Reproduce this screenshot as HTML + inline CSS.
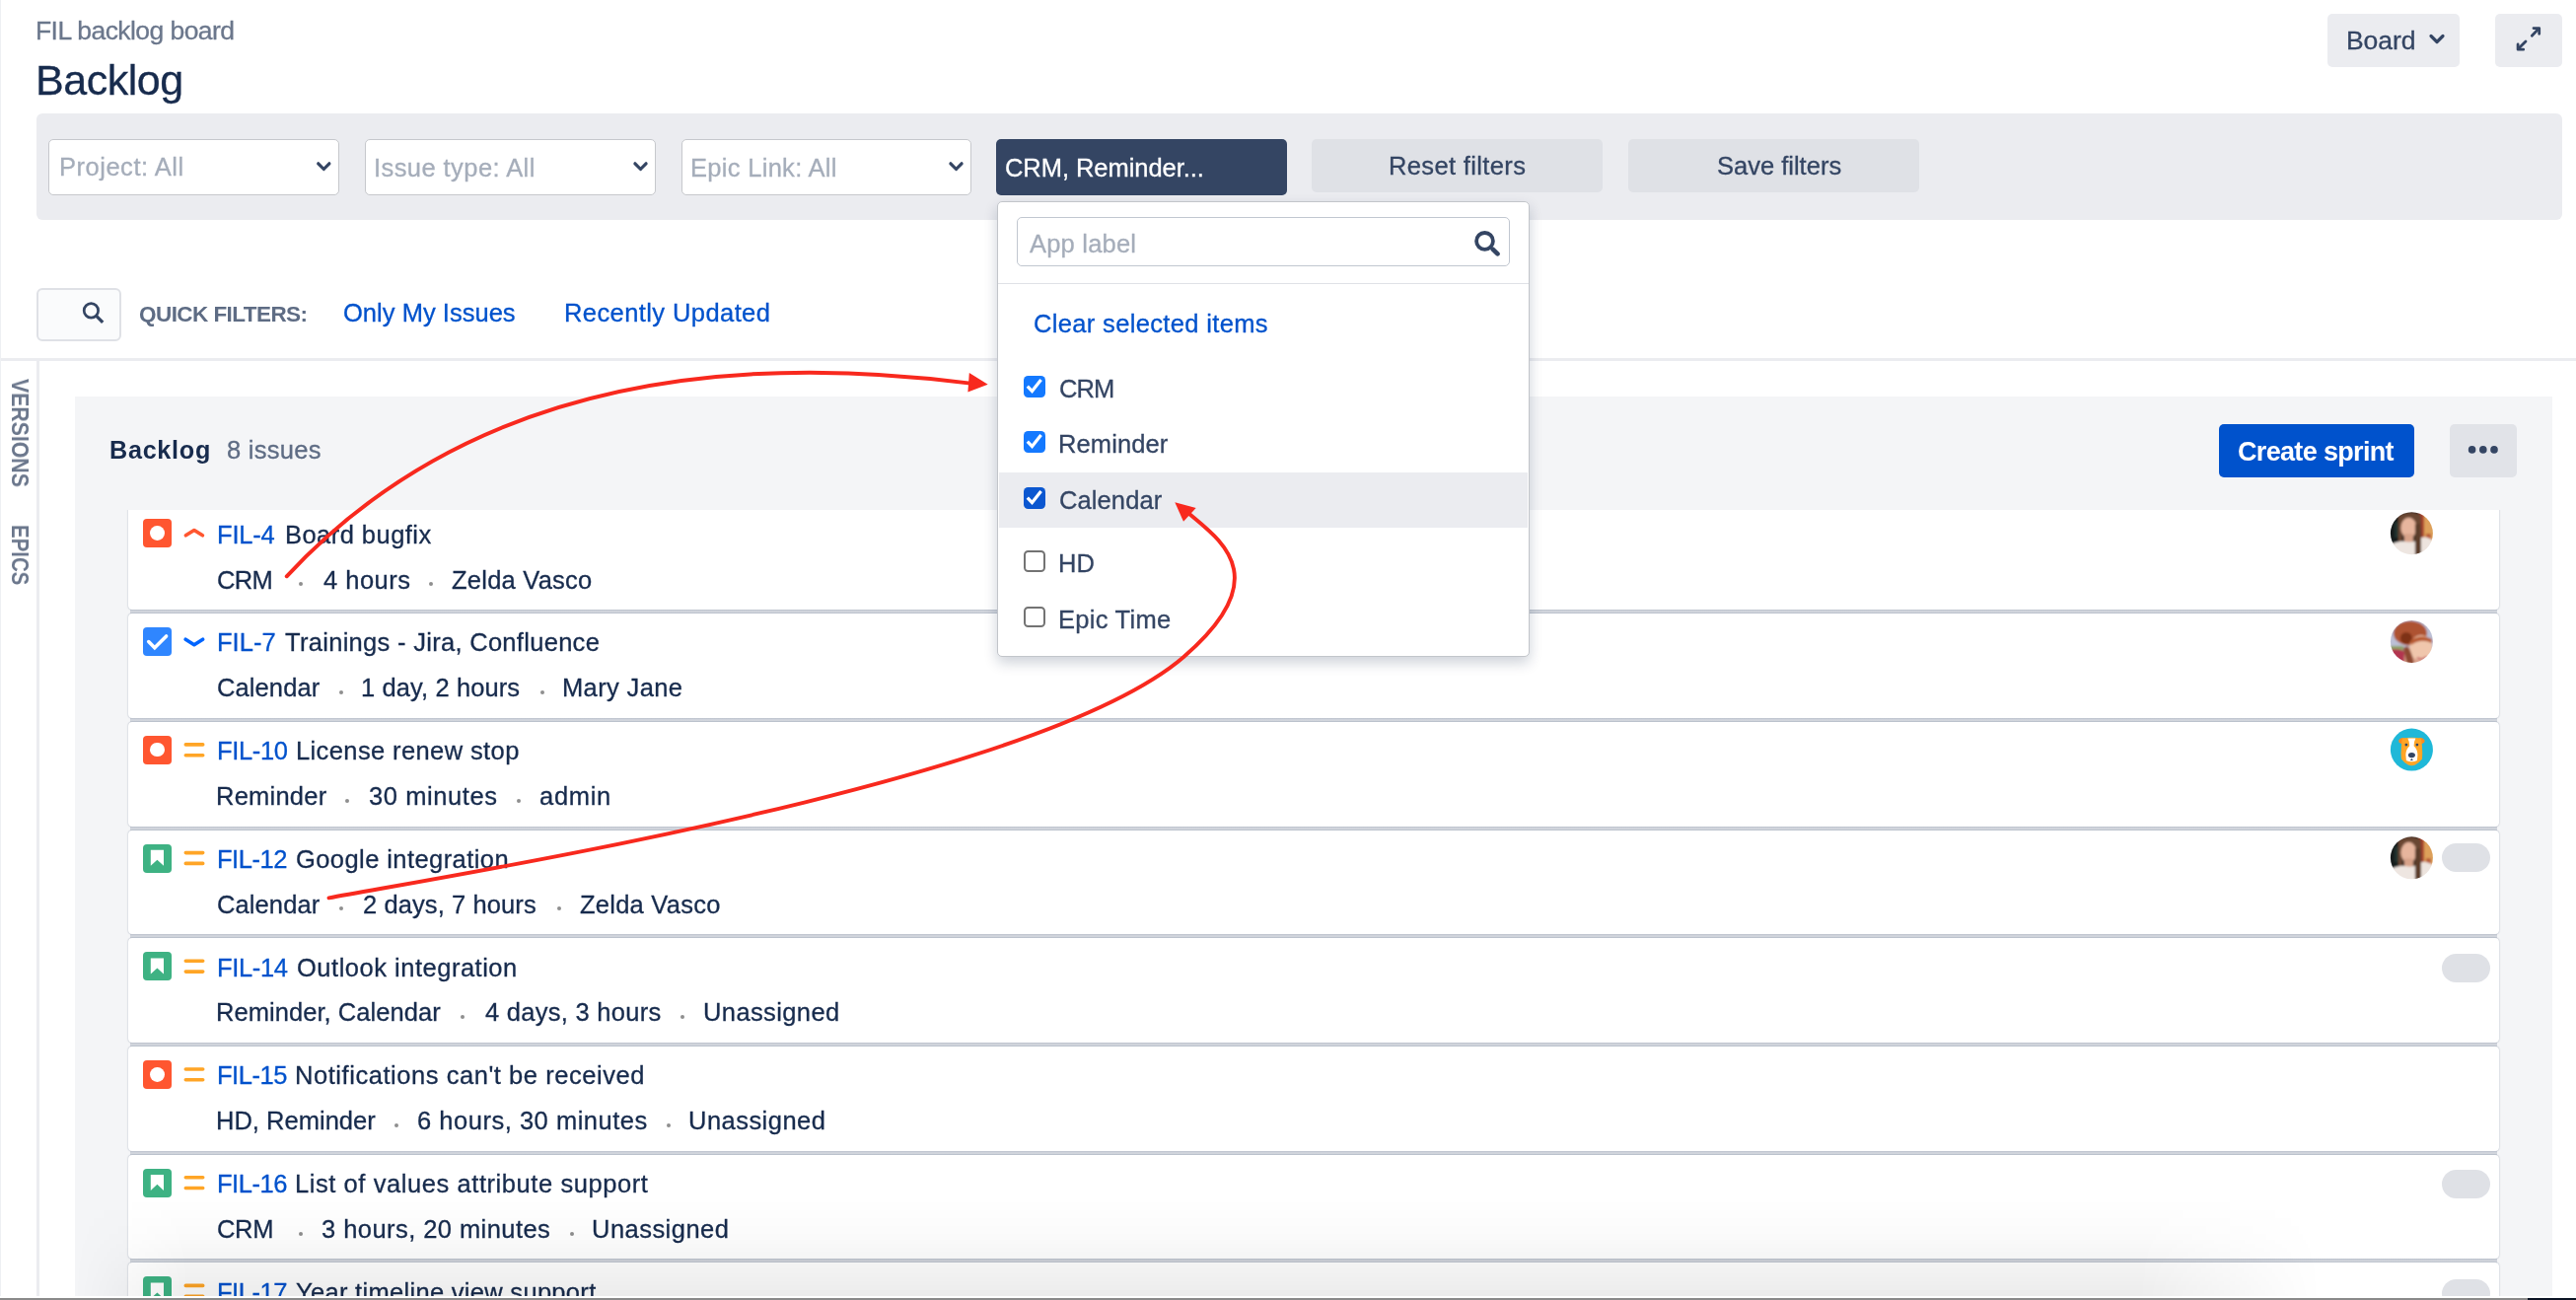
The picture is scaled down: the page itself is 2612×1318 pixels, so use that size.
<!DOCTYPE html><html><head><meta charset="utf-8"><style>
html,body{margin:0;padding:0;}
body{width:2612px;height:1318px;overflow:hidden;position:relative;background:#fff;font-family:"Liberation Sans",sans-serif;}
.tx{position:absolute;white-space:pre;line-height:1;will-change:transform;font-family:"Liberation Sans",sans-serif;}
.bx{position:absolute;box-sizing:border-box;}
svg{position:absolute;overflow:visible;}
</style></head><body>
<div class="bx" style="left:0.0px;top:0.0px;width:1.2px;height:1318.0px;background:#EEF0F3"></div>
<div class="bx" style="left:2360.0px;top:14.0px;width:134.0px;height:54.0px;background:#EBECF0;border-radius:5px"></div>
<svg style="left:0;top:0" width="2612" height="1318"><path d="M2465 36.5 L2471 42.5 L2477 36.5" fill="none" stroke="#344563" stroke-width="3.2" stroke-linecap="round" stroke-linejoin="round"/></svg>
<div class="bx" style="left:2530.0px;top:14.0px;width:68.0px;height:54.0px;background:#EBECF0;border-radius:5px"></div>
<svg style="left:0;top:0" width="2612" height="1318"><g fill="none" stroke="#344563" stroke-width="2.8" stroke-linecap="round" stroke-linejoin="round"><path d="M2567.3 36.2 L2573.6 29.6"/><path d="M2569 28.6 L2574.7 28.6 L2574.7 34.3"/><path d="M2561 42 L2554.2 48.8"/><path d="M2553.1 45 L2553.1 50.2 L2558.7 50.2"/></g></svg>
<div class="bx" style="left:37.0px;top:115.0px;width:2561.0px;height:107.5px;background:#EBECF0;border-radius:6px"></div>
<div class="bx" style="left:49.0px;top:141.0px;width:294.8px;height:57.0px;background:#fff;border:1px solid #C6C8CC;border-radius:5px"></div>
<svg style="left:0;top:0" width="2612" height="1318"><path d="M322.7 165.8 L328.3 171.5 L333.9 165.8" fill="none" stroke="#344563" stroke-width="3.2" stroke-linecap="round" stroke-linejoin="round"/></svg>
<div class="bx" style="left:370.0px;top:141.0px;width:295.0px;height:57.0px;background:#fff;border:1px solid #C6C8CC;border-radius:5px"></div>
<svg style="left:0;top:0" width="2612" height="1318"><path d="M643.9 165.8 L649.5 171.5 L655.1 165.8" fill="none" stroke="#344563" stroke-width="3.2" stroke-linecap="round" stroke-linejoin="round"/></svg>
<div class="bx" style="left:690.5px;top:141.0px;width:294.5px;height:57.0px;background:#fff;border:1px solid #C6C8CC;border-radius:5px"></div>
<svg style="left:0;top:0" width="2612" height="1318"><path d="M963.9 165.8 L969.5 171.5 L975.1 165.8" fill="none" stroke="#344563" stroke-width="3.2" stroke-linecap="round" stroke-linejoin="round"/></svg>
<div class="bx" style="left:1010.0px;top:141.0px;width:295.2px;height:56.6px;background:#344563;border-radius:5px"></div>
<div class="bx" style="left:1330.0px;top:141.0px;width:295.0px;height:53.8px;background:#DFE1E6;border-radius:5px"></div>
<div class="bx" style="left:1651.0px;top:141.0px;width:295.0px;height:53.8px;background:#DFE1E6;border-radius:5px"></div>
<div class="bx" style="left:37.2px;top:292.2px;width:85.6px;height:53.6px;background:#FAFBFC;border:2.8px solid #DFE1E6;border-radius:6px"></div>
<svg style="left:0;top:0" width="2612" height="1318"><circle cx="92.4" cy="314.9" r="7.2" fill="none" stroke="#344563" stroke-width="2.7"/><path d="M97 319.6 L104.2 326.8" stroke="#344563" stroke-width="3.3" stroke-linecap="butt"/></svg>
<div class="bx" style="left:1.0px;top:363.3px;width:2611.0px;height:2.5px;background:#EBECF0"></div>
<div class="bx" style="left:37.0px;top:365.8px;width:2.8px;height:948.2px;background:#EBECF0"></div>
<div class="tx" style="left:31.1px;top:384.2px;font-size:23.5px;font-weight:bold;color:#6B778C;transform-origin:0 0;transform:rotate(90deg) scaleX(0.905)">VERSIONS</div>
<div class="tx" style="left:31.1px;top:532.2px;font-size:23.5px;font-weight:bold;color:#6B778C;transform-origin:0 0;transform:rotate(90deg) scaleX(0.87)">EPICS</div>
<div class="bx" style="left:76.2px;top:402.0px;width:2511.8px;height:912.0px;background:#F4F5F7"></div>
<div class="bx" style="left:2250.0px;top:430.0px;width:198.0px;height:53.7px;background:#0052CC;border-radius:5px"></div>
<div class="bx" style="left:2484.3px;top:430.0px;width:67.7px;height:53.7px;background:#E1E3E8;border-radius:5px"></div>
<svg style="left:0;top:0" width="2612" height="1318"><g fill="#344563"><circle cx="2506.6" cy="455.9" r="3.8"/><circle cx="2517.8" cy="455.9" r="3.8"/><circle cx="2529" cy="455.9" r="3.8"/></g></svg>
<div class="bx" style="left:120px;top:517px;width:2430px;height:110px;overflow:hidden"><div class="bx" style="left:10.0px;top:-4.5px;width:2404.0px;height:105.8px;background:#fff;border-radius:4px;box-shadow:0 0 1.6px rgba(9,30,66,0.38)"></div></div>
<div class="bx" style="left:132.0px;top:618.1px;width:2400.0px;height:4.3px;background:linear-gradient(to bottom,#B8BEC9 0%,#CDD1D9 30%,#D5D9E0 60%,#C9CED6 100%)"></div>
<div class="bx" style="left:145.0px;top:526.4px;width:29.0px;height:29.0px;background:#FF5630;border-radius:4px"></div>
<div class="bx" style="left:152.0px;top:533.3px;width:14.8px;height:14.8px;background:#fff;border-radius:50%"></div>
<svg style="left:0;top:0" width="2612" height="1318"><path d="M188.4 542.8 L196.9 537.5 L205.4 542.8" fill="none" stroke="#FF5630" stroke-width="3.7" stroke-linecap="round" stroke-linejoin="round"/></svg>
<div class="bx" style="left:302.8px;top:590.3px;width:4.0px;height:4.0px;background:#8F8F8F;border-radius:50%"></div>
<div class="bx" style="left:434.8px;top:590.3px;width:4.0px;height:4.0px;background:#8F8F8F;border-radius:50%"></div>
<svg style="left:0;top:0" width="2612" height="1318"><defs><clipPath id="ca0"><circle cx="21.5" cy="21.5" r="21.5"/></clipPath><filter id="fb0" x="-20%" y="-20%" width="140%" height="140%"><feGaussianBlur stdDeviation="1.3"/></filter></defs><g transform="translate(2423.9 519.2)" clip-path="url(#ca0)"><g filter="url(#fb0)"><rect x="-5" y="-5" width="53" height="53" fill="#2A2420"/><rect x="-5" y="-5" width="16" height="53" fill="#151B1B"/><rect x="4" y="10" width="6" height="16" fill="#22302F"/><rect x="29" y="-5" width="6" height="53" fill="#A8402C"/><rect x="34" y="-5" width="14" height="53" fill="#DDA05A"/><rect x="36" y="22" width="5" height="8" fill="#B85A38"/><path d="M8 4 Q20 -3 31 3 L32 44 L24 44 L25 12 Q18 6 12 10 L12 32 L8 32 Z" fill="#6A4632"/><ellipse cx="18.5" cy="16" rx="8" ry="10.5" fill="#E7B59D"/><rect x="14" y="22" width="9" height="9" fill="#D8A38A"/><path d="M0 33 Q8 28 16 30 Q22 31 26 29 L26 48 L0 48 Z" fill="#EEE6E1"/><path d="M31 26 Q36 24 42 28 L44 48 L31 48 Z" fill="#EDE4DE"/><path d="M25 12 L30 12 L31 44 L25 44 Z" fill="#5C3C2A"/></g></g></svg>
<div class="bx" style="left:130.0px;top:622.2px;width:2404.0px;height:105.8px;background:#fff;border-radius:4px;box-shadow:0 0 1.6px rgba(9,30,66,0.38)"></div>
<div class="bx" style="left:132.0px;top:727.8px;width:2400.0px;height:4.3px;background:linear-gradient(to bottom,#B8BEC9 0%,#CDD1D9 30%,#D5D9E0 60%,#C9CED6 100%)"></div>
<div class="bx" style="left:145.0px;top:636.1px;width:29.0px;height:29.0px;background:#2F86FF;border-radius:4px"></div>
<svg style="left:0;top:0" width="2612" height="1318"><path d="M150.7 650.6 L156.8 656.7 L168.6 645.0" fill="none" stroke="#fff" stroke-width="3.6" stroke-linecap="round" stroke-linejoin="miter"/></svg>
<svg style="left:0;top:0" width="2612" height="1318"><path d="M188.2 648.3 L196.9 653.7 L205.6 648.3" fill="none" stroke="#0065FF" stroke-width="3.7" stroke-linecap="round" stroke-linejoin="round"/></svg>
<div class="bx" style="left:343.8px;top:700.0px;width:4.0px;height:4.0px;background:#8F8F8F;border-radius:50%"></div>
<div class="bx" style="left:547.5px;top:700.0px;width:4.0px;height:4.0px;background:#8F8F8F;border-radius:50%"></div>
<svg style="left:0;top:0" width="2612" height="1318"><defs><clipPath id="ca1"><circle cx="21.5" cy="21.5" r="21.5"/></clipPath><filter id="fb1" x="-20%" y="-20%" width="140%" height="140%"><feGaussianBlur stdDeviation="1.3"/></filter></defs><g transform="translate(2423.9 628.9)" clip-path="url(#ca1)"><g filter="url(#fb1)"><rect x="-5" y="-5" width="53" height="53" fill="#BCC0D6"/><rect x="-5" y="26" width="18" height="6" fill="#8FA268"/><path d="M-5 31 Q8 27 17 33 L22 48 L-5 48 Z" fill="#B23650"/><ellipse cx="20" cy="13" rx="17" ry="12.5" fill="#AE5230"/><ellipse cx="16" cy="18" rx="6" ry="6" fill="#7E3218"/><path d="M14 28 L30 26 L34 48 L14 48 Z" fill="#D9A08A"/><ellipse cx="31" cy="28" rx="11.5" ry="13" fill="#F0C6AC"/><path d="M20 21 Q30 13 42 19 L42 23 Q31 18 21 25 Z" fill="#B85A32"/><path d="M17 26 Q21 30 24 44 L18 48 Q14 34 13 28 Z" fill="#8E4A30"/><path d="M27 38 Q32 41 37 37" stroke="#C86A6A" stroke-width="2" fill="none"/></g></g></svg>
<div class="bx" style="left:130.0px;top:731.9px;width:2404.0px;height:105.8px;background:#fff;border-radius:4px;box-shadow:0 0 1.6px rgba(9,30,66,0.38)"></div>
<div class="bx" style="left:132.0px;top:837.5px;width:2400.0px;height:4.3px;background:linear-gradient(to bottom,#B8BEC9 0%,#CDD1D9 30%,#D5D9E0 60%,#C9CED6 100%)"></div>
<div class="bx" style="left:145.0px;top:745.8px;width:29.0px;height:29.0px;background:#FF5630;border-radius:4px"></div>
<div class="bx" style="left:152.0px;top:752.7px;width:14.8px;height:14.8px;background:#fff;border-radius:50%"></div>
<svg style="left:0;top:0" width="2612" height="1318"><path d="M188.3 754.9 L205.7 754.9 M188.3 765.7 L205.7 765.7" fill="none" stroke="#FFA526" stroke-width="3.6" stroke-linecap="round"/></svg>
<div class="bx" style="left:350.3px;top:809.7px;width:4.0px;height:4.0px;background:#8F8F8F;border-radius:50%"></div>
<div class="bx" style="left:523.9px;top:809.7px;width:4.0px;height:4.0px;background:#8F8F8F;border-radius:50%"></div>
<svg style="left:0;top:0" width="2612" height="1318"><g transform="translate(2423.9 738.6)"><circle cx="21.5" cy="21.5" r="21.5" fill="#1FB8D8"/><path d="M8.5 12 Q10 8.5 13.5 9.5 L15 16 Q11 16.5 8.5 14 Z" fill="#FF8B1F"/><path d="M34.5 12 Q33 8.5 29.5 9.5 L28 16 Q32 16.5 34.5 14 Z" fill="#FF8B1F"/><path d="M12 10 Q21.5 8.5 31 10 Q33 22 32 31 Q29 35 25 37 Q21.5 38.5 18 37 Q14 35 11 31 Q10 22 12 10 Z" fill="#FFA526"/><path d="M17.5 10 L25.5 10 Q23.5 14 23.8 18 Q27.5 21 27.5 27 L27 32.5 Q21.5 35 16 32.5 L15.5 27 Q15.5 21 19.2 18 Q19.5 14 17.5 10 Z" fill="#fff"/><circle cx="16" cy="16.5" r="1.4" fill="#344563"/><circle cx="27" cy="16.5" r="1.4" fill="#344563"/><ellipse cx="21.5" cy="27" rx="3.5" ry="2.6" fill="#344563"/><path d="M20 32.5 L21.5 30.5 L23 32.5 Z" fill="#344563"/></g></svg>
<div class="bx" style="left:130.0px;top:841.6px;width:2404.0px;height:105.8px;background:#fff;border-radius:4px;box-shadow:0 0 1.6px rgba(9,30,66,0.38)"></div>
<div class="bx" style="left:132.0px;top:947.2px;width:2400.0px;height:4.3px;background:linear-gradient(to bottom,#B8BEC9 0%,#CDD1D9 30%,#D5D9E0 60%,#C9CED6 100%)"></div>
<div class="bx" style="left:145.0px;top:855.5px;width:29.0px;height:29.0px;background:#3EB283;border-radius:4px"></div>
<svg style="left:0;top:0" width="2612" height="1318"><path d="M152.8 861.8 L166 861.8 L166 877.8 L159.4 871.7 L152.8 877.8 Z" fill="#fff"/></svg>
<svg style="left:0;top:0" width="2612" height="1318"><path d="M188.3 864.6 L205.7 864.6 M188.3 875.4 L205.7 875.4" fill="none" stroke="#FFA526" stroke-width="3.6" stroke-linecap="round"/></svg>
<div class="bx" style="left:343.8px;top:919.4px;width:4.0px;height:4.0px;background:#8F8F8F;border-radius:50%"></div>
<div class="bx" style="left:564.5px;top:919.4px;width:4.0px;height:4.0px;background:#8F8F8F;border-radius:50%"></div>
<svg style="left:0;top:0" width="2612" height="1318"><defs><clipPath id="ca3"><circle cx="21.5" cy="21.5" r="21.5"/></clipPath><filter id="fb3" x="-20%" y="-20%" width="140%" height="140%"><feGaussianBlur stdDeviation="1.3"/></filter></defs><g transform="translate(2423.9 848.3)" clip-path="url(#ca3)"><g filter="url(#fb3)"><rect x="-5" y="-5" width="53" height="53" fill="#2A2420"/><rect x="-5" y="-5" width="16" height="53" fill="#151B1B"/><rect x="4" y="10" width="6" height="16" fill="#22302F"/><rect x="29" y="-5" width="6" height="53" fill="#A8402C"/><rect x="34" y="-5" width="14" height="53" fill="#DDA05A"/><rect x="36" y="22" width="5" height="8" fill="#B85A38"/><path d="M8 4 Q20 -3 31 3 L32 44 L24 44 L25 12 Q18 6 12 10 L12 32 L8 32 Z" fill="#6A4632"/><ellipse cx="18.5" cy="16" rx="8" ry="10.5" fill="#E7B59D"/><rect x="14" y="22" width="9" height="9" fill="#D8A38A"/><path d="M0 33 Q8 28 16 30 Q22 31 26 29 L26 48 L0 48 Z" fill="#EEE6E1"/><path d="M31 26 Q36 24 42 28 L44 48 L31 48 Z" fill="#EDE4DE"/><path d="M25 12 L30 12 L31 44 L25 44 Z" fill="#5C3C2A"/></g></g></svg>
<div class="bx" style="left:2476.0px;top:854.9px;width:49.0px;height:28.8px;background:#DFE1E6;border-radius:15px"></div>
<div class="bx" style="left:130.0px;top:951.3px;width:2404.0px;height:105.8px;background:#fff;border-radius:4px;box-shadow:0 0 1.6px rgba(9,30,66,0.38)"></div>
<div class="bx" style="left:132.0px;top:1056.9px;width:2400.0px;height:4.3px;background:linear-gradient(to bottom,#B8BEC9 0%,#CDD1D9 30%,#D5D9E0 60%,#C9CED6 100%)"></div>
<div class="bx" style="left:145.0px;top:965.2px;width:29.0px;height:29.0px;background:#3EB283;border-radius:4px"></div>
<svg style="left:0;top:0" width="2612" height="1318"><path d="M152.8 971.5 L166 971.5 L166 987.5 L159.4 981.4 L152.8 987.5 Z" fill="#fff"/></svg>
<svg style="left:0;top:0" width="2612" height="1318"><path d="M188.3 974.3 L205.7 974.3 M188.3 985.1 L205.7 985.1" fill="none" stroke="#FFA526" stroke-width="3.6" stroke-linecap="round"/></svg>
<div class="bx" style="left:467.3px;top:1029.1px;width:4.0px;height:4.0px;background:#8F8F8F;border-radius:50%"></div>
<div class="bx" style="left:690.0px;top:1029.1px;width:4.0px;height:4.0px;background:#8F8F8F;border-radius:50%"></div>
<div class="bx" style="left:2476.0px;top:967.3px;width:49.0px;height:28.8px;background:#DFE1E6;border-radius:15px"></div>
<div class="bx" style="left:130.0px;top:1061.0px;width:2404.0px;height:105.8px;background:#fff;border-radius:4px;box-shadow:0 0 1.6px rgba(9,30,66,0.38)"></div>
<div class="bx" style="left:132.0px;top:1166.6px;width:2400.0px;height:4.3px;background:linear-gradient(to bottom,#B8BEC9 0%,#CDD1D9 30%,#D5D9E0 60%,#C9CED6 100%)"></div>
<div class="bx" style="left:145.0px;top:1074.9px;width:29.0px;height:29.0px;background:#FF5630;border-radius:4px"></div>
<div class="bx" style="left:152.0px;top:1081.8px;width:14.8px;height:14.8px;background:#fff;border-radius:50%"></div>
<svg style="left:0;top:0" width="2612" height="1318"><path d="M188.3 1084.0 L205.7 1084.0 M188.3 1094.8 L205.7 1094.8" fill="none" stroke="#FFA526" stroke-width="3.6" stroke-linecap="round"/></svg>
<div class="bx" style="left:399.8px;top:1138.8px;width:4.0px;height:4.0px;background:#8F8F8F;border-radius:50%"></div>
<div class="bx" style="left:675.8px;top:1138.8px;width:4.0px;height:4.0px;background:#8F8F8F;border-radius:50%"></div>
<div class="bx" style="left:130.0px;top:1170.7px;width:2404.0px;height:105.8px;background:#fff;border-radius:4px;box-shadow:0 0 1.6px rgba(9,30,66,0.38)"></div>
<div class="bx" style="left:132.0px;top:1276.3px;width:2400.0px;height:4.3px;background:linear-gradient(to bottom,#B8BEC9 0%,#CDD1D9 30%,#D5D9E0 60%,#C9CED6 100%)"></div>
<div class="bx" style="left:145.0px;top:1184.6px;width:29.0px;height:29.0px;background:#3EB283;border-radius:4px"></div>
<svg style="left:0;top:0" width="2612" height="1318"><path d="M152.8 1190.9 L166 1190.9 L166 1206.9 L159.4 1200.8 L152.8 1206.9 Z" fill="#fff"/></svg>
<svg style="left:0;top:0" width="2612" height="1318"><path d="M188.3 1193.7 L205.7 1193.7 M188.3 1204.5 L205.7 1204.5" fill="none" stroke="#FFA526" stroke-width="3.6" stroke-linecap="round"/></svg>
<div class="bx" style="left:302.7px;top:1248.5px;width:4.0px;height:4.0px;background:#8F8F8F;border-radius:50%"></div>
<div class="bx" style="left:578.0px;top:1248.5px;width:4.0px;height:4.0px;background:#8F8F8F;border-radius:50%"></div>
<div class="bx" style="left:2476.0px;top:1186.0px;width:49.0px;height:28.8px;background:#DFE1E6;border-radius:15px"></div>
<div class="bx" style="left:130.0px;top:1280.4px;width:2404.0px;height:105.8px;background:#fff;border-radius:4px;box-shadow:0 0 1.6px rgba(9,30,66,0.38)"></div>
<div class="bx" style="left:132.0px;top:1386.0px;width:2400.0px;height:4.3px;background:linear-gradient(to bottom,#B8BEC9 0%,#CDD1D9 30%,#D5D9E0 60%,#C9CED6 100%)"></div>
<div class="bx" style="left:145.0px;top:1294.3px;width:29.0px;height:29.0px;background:#3EB283;border-radius:4px"></div>
<svg style="left:0;top:0" width="2612" height="1318"><path d="M152.8 1300.6 L166 1300.6 L166 1316.6 L159.4 1310.5 L152.8 1316.6 Z" fill="#fff"/></svg>
<svg style="left:0;top:0" width="2612" height="1318"><path d="M188.3 1303.4 L205.7 1303.4 M188.3 1314.2 L205.7 1314.2" fill="none" stroke="#FFA526" stroke-width="3.6" stroke-linecap="round"/></svg>
<div class="bx" style="left:2476.0px;top:1296.9px;width:49.0px;height:28.8px;background:#DFE1E6;border-radius:15px"></div>
<div class="bx" style="left:1010.8px;top:204.4px;width:540.6px;height:461.6px;background:#fff;border:1.2px solid #C2C5CA;border-radius:5px;box-shadow:0 6px 14px rgba(9,30,66,0.20)"></div>
<div class="bx" style="left:1031.0px;top:220.4px;width:499.6px;height:49.2px;background:#fff;border:1.5px solid #C1C7D0;border-radius:5px"></div>
<svg style="left:0;top:0" width="2612" height="1318"><circle cx="1505.5" cy="244.4" r="8.4" fill="none" stroke="#344563" stroke-width="3.8"/><path d="M1513.6 252.6 L1518.5 257.4" stroke="#344563" stroke-width="4.6" stroke-linecap="round"/></svg>
<div class="bx" style="left:1012.0px;top:287.0px;width:538.0px;height:1.2px;background:#DFE1E6"></div>
<div class="bx" style="left:1013.0px;top:478.5px;width:535.8px;height:56.0px;background:#EBECF0"></div>
<div class="bx" style="left:1038.0px;top:380.8px;width:21.8px;height:21.8px;background:#1479FF;border-radius:4.5px"></div>
<svg style="left:0;top:0" width="2612" height="1318"><path d="M1041.8 391.7 L1046.5 396.6 L1055.6 385.0" fill="none" stroke="#fff" stroke-width="3.2" stroke-linecap="butt" stroke-linejoin="miter"/></svg>
<div class="bx" style="left:1038.0px;top:436.8px;width:21.8px;height:21.8px;background:#1479FF;border-radius:4.5px"></div>
<svg style="left:0;top:0" width="2612" height="1318"><path d="M1041.8 447.7 L1046.5 452.6 L1055.6 441.0" fill="none" stroke="#fff" stroke-width="3.2" stroke-linecap="butt" stroke-linejoin="miter"/></svg>
<div class="bx" style="left:1038.0px;top:493.8px;width:21.8px;height:21.8px;background:#0B57D0;border-radius:4.5px"></div>
<svg style="left:0;top:0" width="2612" height="1318"><path d="M1041.8 504.7 L1046.5 509.6 L1055.6 498.0" fill="none" stroke="#fff" stroke-width="3.2" stroke-linecap="butt" stroke-linejoin="miter"/></svg>
<div class="bx" style="left:1038.0px;top:557.8px;width:21.8px;height:21.8px;background:#fff;border:2px solid #737373;border-radius:4.5px"></div>
<div class="bx" style="left:1038.0px;top:614.7px;width:21.8px;height:21.8px;background:#fff;border:2px solid #737373;border-radius:4.5px"></div>
<div class="tx" style="left:36.0px;top:18.1px;font-size:26.50px;color:#6B778C;font-weight:normal;letter-spacing:-0.575px;-webkit-text-stroke:0.3px currentColor;">FIL backlog board</div>
<div class="tx" style="left:35.8px;top:59.5px;font-size:43.00px;color:#172B4D;font-weight:normal;letter-spacing:-0.467px;-webkit-text-stroke:0.3px currentColor;">Backlog</div>
<div class="tx" style="left:59.8px;top:157.1px;font-size:25.50px;color:#A5ADBA;font-weight:normal;letter-spacing:0.518px;-webkit-text-stroke:0.3px currentColor;">Project: All</div>
<div class="tx" style="left:379.0px;top:157.5px;font-size:25.50px;color:#A5ADBA;font-weight:normal;letter-spacing:0.429px;-webkit-text-stroke:0.3px currentColor;">Issue type: All</div>
<div class="tx" style="left:699.5px;top:157.5px;font-size:25.50px;color:#A5ADBA;font-weight:normal;letter-spacing:0.300px;-webkit-text-stroke:0.3px currentColor;">Epic Link: All</div>
<div class="tx" style="left:1018.5px;top:157.7px;font-size:25.50px;color:#FFFFFF;font-weight:normal;letter-spacing:-0.053px;-webkit-text-stroke:0.3px currentColor;">CRM, Reminder...</div>
<div class="tx" style="left:1407.7px;top:156.3px;font-size:25.50px;color:#344563;font-weight:normal;letter-spacing:0.358px;-webkit-text-stroke:0.3px currentColor;">Reset filters</div>
<div class="tx" style="left:1741.0px;top:156.4px;font-size:25.50px;color:#344563;font-weight:normal;letter-spacing:0.000px;-webkit-text-stroke:0.3px currentColor;">Save filters</div>
<div class="tx" style="left:2379.0px;top:27.9px;font-size:26.50px;color:#344563;font-weight:normal;letter-spacing:-0.075px;-webkit-text-stroke:0.3px currentColor;">Board</div>
<div class="tx" style="left:1044.3px;top:234.6px;font-size:25.50px;color:#A5ADBA;font-weight:normal;letter-spacing:0.213px;-webkit-text-stroke:0.3px currentColor;">App label</div>
<div class="tx" style="left:1048.0px;top:316.3px;font-size:25.50px;color:#0052CC;font-weight:normal;letter-spacing:0.347px;-webkit-text-stroke:0.3px currentColor;">Clear selected items</div>
<div class="tx" style="left:1073.8px;top:381.5px;font-size:25.50px;color:#344563;font-weight:normal;letter-spacing:-0.900px;-webkit-text-stroke:0.3px currentColor;">CRM</div>
<div class="tx" style="left:1072.8px;top:438.3px;font-size:25.50px;color:#344563;font-weight:normal;letter-spacing:0.100px;-webkit-text-stroke:0.3px currentColor;">Reminder</div>
<div class="tx" style="left:1073.8px;top:495.3px;font-size:25.50px;color:#344563;font-weight:normal;letter-spacing:0.100px;-webkit-text-stroke:0.3px currentColor;">Calendar</div>
<div class="tx" style="left:1072.8px;top:559.3px;font-size:25.50px;color:#344563;font-weight:normal;letter-spacing:0.200px;-webkit-text-stroke:0.3px currentColor;">HD</div>
<div class="tx" style="left:1072.8px;top:615.6px;font-size:25.50px;color:#344563;font-weight:normal;letter-spacing:0.275px;-webkit-text-stroke:0.3px currentColor;">Epic Time</div>
<div class="tx" style="left:140.9px;top:307.9px;font-size:22.50px;color:#5E6C84;font-weight:bold;letter-spacing:-0.562px;">QUICK FILTERS:</div>
<div class="tx" style="left:348.2px;top:304.9px;font-size:25.50px;color:#0052CC;font-weight:normal;letter-spacing:0.023px;-webkit-text-stroke:0.3px currentColor;">Only My Issues</div>
<div class="tx" style="left:571.6px;top:304.9px;font-size:25.50px;color:#0052CC;font-weight:normal;letter-spacing:0.413px;-webkit-text-stroke:0.3px currentColor;">Recently Updated</div>
<div class="tx" style="left:111.0px;top:443.9px;font-size:25.20px;color:#172B4D;font-weight:bold;letter-spacing:0.717px;">Backlog</div>
<div class="tx" style="left:230.0px;top:443.6px;font-size:25.50px;color:#5E6C84;font-weight:normal;letter-spacing:0.271px;-webkit-text-stroke:0.3px currentColor;">8 issues</div>
<div class="tx" style="left:2269.0px;top:444.6px;font-size:27.00px;color:#FFFFFF;font-weight:bold;letter-spacing:-0.667px;">Create sprint</div>
<div class="tx" style="left:219.8px;top:529.7px;font-size:25.50px;color:#0052CC;font-weight:normal;letter-spacing:-0.200px;-webkit-text-stroke:0.3px currentColor;">FIL-4</div>
<div class="tx" style="left:288.8px;top:529.7px;font-size:25.50px;color:#172B4D;font-weight:normal;letter-spacing:0.455px;-webkit-text-stroke:0.3px currentColor;">Board bugfix</div>
<div class="tx" style="left:220.0px;top:575.6px;font-size:25.50px;color:#172B4D;font-weight:normal;letter-spacing:-0.650px;-webkit-text-stroke:0.3px currentColor;">CRM</div>
<div class="tx" style="left:327.5px;top:575.6px;font-size:25.50px;color:#172B4D;font-weight:normal;letter-spacing:0.483px;-webkit-text-stroke:0.3px currentColor;">4 hours</div>
<div class="tx" style="left:458.4px;top:575.6px;font-size:25.50px;color:#172B4D;font-weight:normal;letter-spacing:0.240px;-webkit-text-stroke:0.3px currentColor;">Zelda Vasco</div>
<div class="tx" style="left:219.8px;top:639.4px;font-size:25.50px;color:#0052CC;font-weight:normal;letter-spacing:0.025px;-webkit-text-stroke:0.3px currentColor;">FIL-7</div>
<div class="tx" style="left:288.6px;top:639.4px;font-size:25.50px;color:#172B4D;font-weight:normal;letter-spacing:0.296px;-webkit-text-stroke:0.3px currentColor;">Trainings - Jira, Confluence</div>
<div class="tx" style="left:220.0px;top:685.3px;font-size:25.50px;color:#172B4D;font-weight:normal;letter-spacing:0.100px;-webkit-text-stroke:0.3px currentColor;">Calendar</div>
<div class="tx" style="left:366.4px;top:685.3px;font-size:25.50px;color:#172B4D;font-weight:normal;letter-spacing:0.108px;-webkit-text-stroke:0.3px currentColor;">1 day, 2 hours</div>
<div class="tx" style="left:569.9px;top:685.3px;font-size:25.50px;color:#172B4D;font-weight:normal;letter-spacing:0.362px;-webkit-text-stroke:0.3px currentColor;">Mary Jane</div>
<div class="tx" style="left:219.8px;top:749.1px;font-size:25.50px;color:#0052CC;font-weight:normal;letter-spacing:-0.360px;-webkit-text-stroke:0.3px currentColor;">FIL-10</div>
<div class="tx" style="left:299.7px;top:749.1px;font-size:25.50px;color:#172B4D;font-weight:normal;letter-spacing:0.388px;-webkit-text-stroke:0.3px currentColor;">License renew stop</div>
<div class="tx" style="left:219.0px;top:795.0px;font-size:25.50px;color:#172B4D;font-weight:normal;letter-spacing:0.229px;-webkit-text-stroke:0.3px currentColor;">Reminder</div>
<div class="tx" style="left:374.3px;top:795.0px;font-size:25.50px;color:#172B4D;font-weight:normal;letter-spacing:0.578px;-webkit-text-stroke:0.3px currentColor;">30 minutes</div>
<div class="tx" style="left:547.0px;top:795.0px;font-size:25.50px;color:#172B4D;font-weight:normal;letter-spacing:0.700px;-webkit-text-stroke:0.3px currentColor;">admin</div>
<div class="tx" style="left:219.8px;top:858.8px;font-size:25.50px;color:#0052CC;font-weight:normal;letter-spacing:-0.460px;-webkit-text-stroke:0.3px currentColor;">FIL-12</div>
<div class="tx" style="left:300.0px;top:858.8px;font-size:25.50px;color:#172B4D;font-weight:normal;letter-spacing:0.424px;-webkit-text-stroke:0.3px currentColor;">Google integration</div>
<div class="tx" style="left:220.0px;top:904.7px;font-size:25.50px;color:#172B4D;font-weight:normal;letter-spacing:0.100px;-webkit-text-stroke:0.3px currentColor;">Calendar</div>
<div class="tx" style="left:368.2px;top:904.7px;font-size:25.50px;color:#172B4D;font-weight:normal;letter-spacing:0.093px;-webkit-text-stroke:0.3px currentColor;">2 days, 7 hours</div>
<div class="tx" style="left:587.9px;top:904.7px;font-size:25.50px;color:#172B4D;font-weight:normal;letter-spacing:0.250px;-webkit-text-stroke:0.3px currentColor;">Zelda Vasco</div>
<div class="tx" style="left:219.8px;top:968.5px;font-size:25.50px;color:#0052CC;font-weight:normal;letter-spacing:-0.360px;-webkit-text-stroke:0.3px currentColor;">FIL-14</div>
<div class="tx" style="left:300.9px;top:968.5px;font-size:25.50px;color:#172B4D;font-weight:normal;letter-spacing:0.511px;-webkit-text-stroke:0.3px currentColor;">Outlook integration</div>
<div class="tx" style="left:219.0px;top:1014.4px;font-size:25.50px;color:#172B4D;font-weight:normal;letter-spacing:0.053px;-webkit-text-stroke:0.3px currentColor;">Reminder, Calendar</div>
<div class="tx" style="left:491.7px;top:1014.4px;font-size:25.50px;color:#172B4D;font-weight:normal;letter-spacing:0.279px;-webkit-text-stroke:0.3px currentColor;">4 days, 3 hours</div>
<div class="tx" style="left:712.5px;top:1014.4px;font-size:25.50px;color:#172B4D;font-weight:normal;letter-spacing:0.389px;-webkit-text-stroke:0.3px currentColor;">Unassigned</div>
<div class="tx" style="left:219.8px;top:1078.2px;font-size:25.50px;color:#0052CC;font-weight:normal;letter-spacing:-0.460px;-webkit-text-stroke:0.3px currentColor;">FIL-15</div>
<div class="tx" style="left:299.2px;top:1078.2px;font-size:25.50px;color:#172B4D;font-weight:normal;letter-spacing:0.547px;-webkit-text-stroke:0.3px currentColor;">Notifications can&#39;t be received</div>
<div class="tx" style="left:219.0px;top:1124.1px;font-size:25.50px;color:#172B4D;font-weight:normal;letter-spacing:0.018px;-webkit-text-stroke:0.3px currentColor;">HD, Reminder</div>
<div class="tx" style="left:422.8px;top:1124.1px;font-size:25.50px;color:#172B4D;font-weight:normal;letter-spacing:0.517px;-webkit-text-stroke:0.3px currentColor;">6 hours, 30 minutes</div>
<div class="tx" style="left:697.9px;top:1124.1px;font-size:25.50px;color:#172B4D;font-weight:normal;letter-spacing:0.467px;-webkit-text-stroke:0.3px currentColor;">Unassigned</div>
<div class="tx" style="left:219.8px;top:1187.9px;font-size:25.50px;color:#0052CC;font-weight:normal;letter-spacing:-0.460px;-webkit-text-stroke:0.3px currentColor;">FIL-16</div>
<div class="tx" style="left:299.2px;top:1187.9px;font-size:25.50px;color:#172B4D;font-weight:normal;letter-spacing:0.571px;-webkit-text-stroke:0.3px currentColor;">List of values attribute support</div>
<div class="tx" style="left:220.0px;top:1233.8px;font-size:25.50px;color:#172B4D;font-weight:normal;letter-spacing:-0.350px;-webkit-text-stroke:0.3px currentColor;">CRM</div>
<div class="tx" style="left:326.4px;top:1233.8px;font-size:25.50px;color:#172B4D;font-weight:normal;letter-spacing:0.439px;-webkit-text-stroke:0.3px currentColor;">3 hours, 20 minutes</div>
<div class="tx" style="left:600.0px;top:1233.8px;font-size:25.50px;color:#172B4D;font-weight:normal;letter-spacing:0.467px;-webkit-text-stroke:0.3px currentColor;">Unassigned</div>
<div class="tx" style="left:219.8px;top:1297.6px;font-size:25.50px;color:#0052CC;font-weight:normal;letter-spacing:-0.460px;-webkit-text-stroke:0.3px currentColor;">FIL-17</div>
<div class="tx" style="left:300.0px;top:1297.6px;font-size:25.50px;color:#172B4D;font-weight:normal;letter-spacing:0.300px;-webkit-text-stroke:0.3px currentColor;">Year timeline view support</div>
<svg style="left:0;top:0" width="2612" height="1318"><path d="M290.7 584.3 C472.8 388.6 731.5 356.3 984 388.6" fill="none" stroke="#F8291E" stroke-width="3.9" stroke-linecap="round"/><path d="M1001.7 389.8 L982.8 378 L981.4 397.5 Z" fill="#F8291E"/><path d="M333.5 910.4 C460.8 886.5 1051.8 793.5 1200 666.2 C1293.9 585.6 1238.0 547.9 1206 521" fill="none" stroke="#F8291E" stroke-width="3.9" stroke-linecap="round"/><path d="M1191.3 509.2 L1200 528.8 L1212.7 515 Z" fill="#F8291E"/></svg>
<div class="bx" style="left:76.0px;top:1215.0px;width:2324.0px;height:99.0px;background:linear-gradient(to bottom,rgba(0,0,0,0) 0%,rgba(0,0,0,0.02) 40%,rgba(0,0,0,0.075) 100%);-webkit-mask-image:linear-gradient(to right,transparent 0%,#000 5%,#000 90%,transparent 98%)"></div>
<div class="bx" style="left:0.0px;top:1314.0px;width:2612.0px;height:1.8px;background:#fff"></div>
<div class="bx" style="left:0.0px;top:1315.8px;width:2612.0px;height:2.2px;background:#8A8A8A"></div>
<div class="bx" style="left:2563.0px;top:1315.8px;width:49.0px;height:2.2px;background:#0C1424"></div>
</body></html>
